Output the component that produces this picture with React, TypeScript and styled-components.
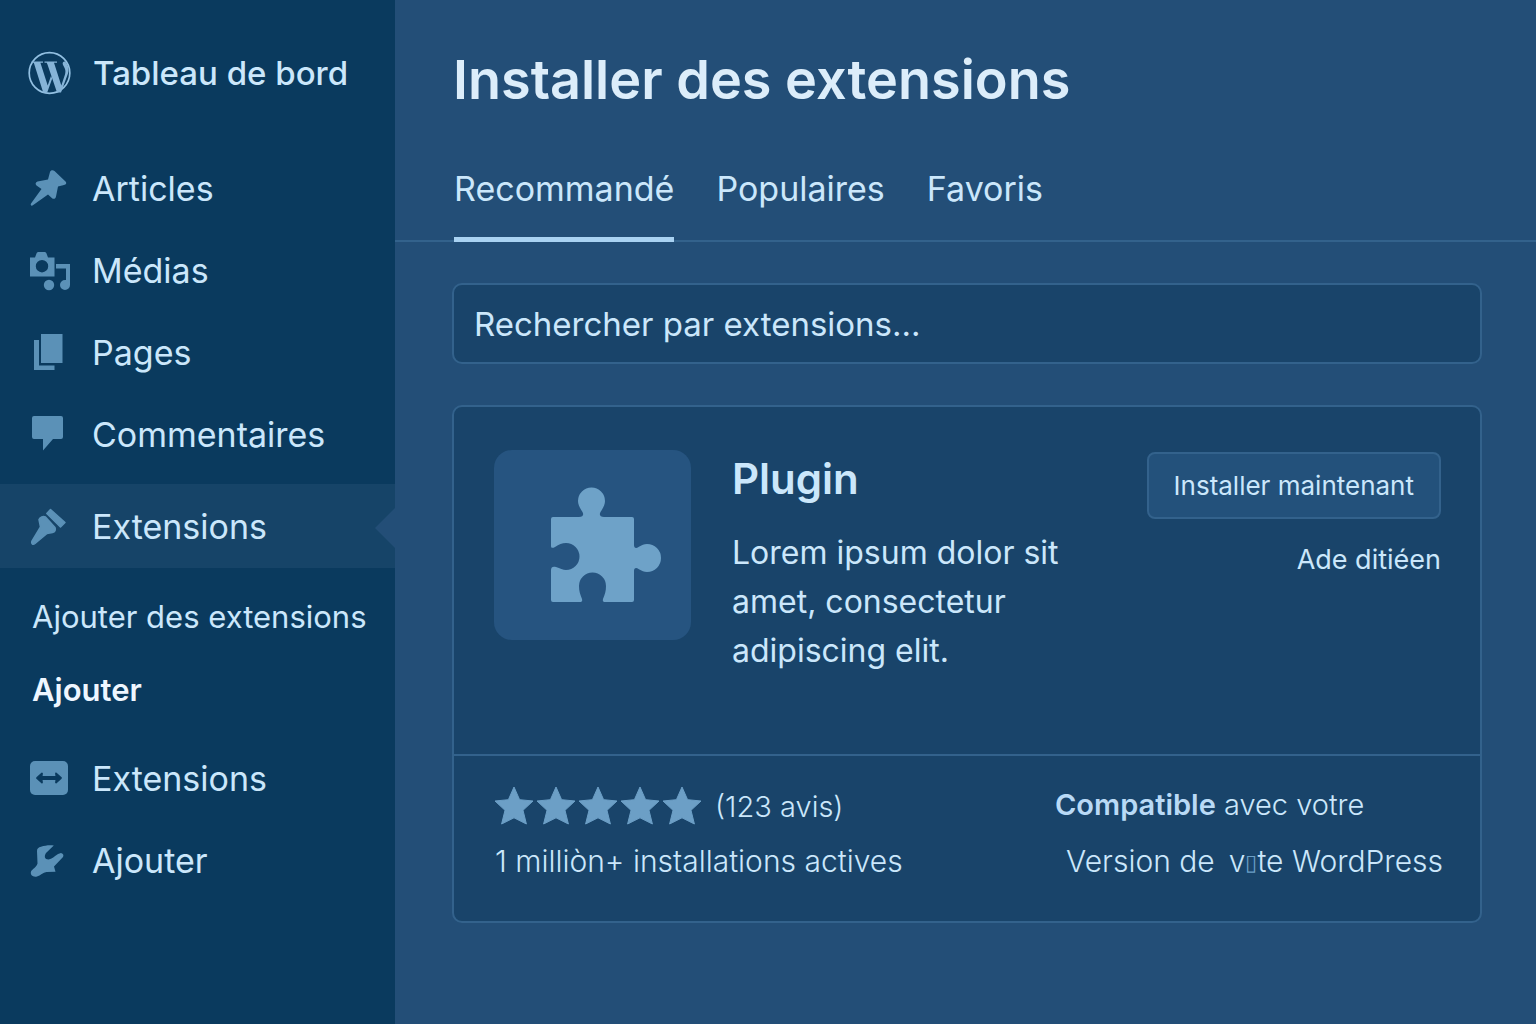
import React from "react";
import styled, { createGlobalStyle, css } from "styled-components";

const color = {
  sidebar: "#0a3a5e",
  sidebarActive: "#164468",
  page: "#234e77",
  panel: "#19446a",
  line: "#33628c",
  text: "#cbe7fb",
  title: "#dcedfa",
  strong: "#eef6ff",
  icon: "#5b91b7",
  bright: "#6c9fc6",
};

const Global = createGlobalStyle`
  *, *::before, *::after { box-sizing: border-box; }
  body {
    margin: 0;
    background: ${color.page};
    color: ${color.text};
    font-family: Inter, "Liberation Sans", sans-serif;
  }
  h1, h2, p, ul { margin: 0; padding: 0; }
  ul { list-style: none; }
`;

const Shell = styled.div`
  display: grid;
  grid-template-columns: 395px minmax(0, 1fr);
  min-height: 100vh;
`;

const Sidebar = styled.nav`
  background: ${color.sidebar};
  padding-top: 32px;
`;

const Brand = styled.a`
  display: flex;
  align-items: center;
  gap: 21px;
  height: 82px;
  padding-left: 28px;
  margin-bottom: 33px;
  color: ${color.text};
  font-size: 33px;
  font-weight: 500;
  text-decoration: none;
`;

const NavLink = styled.a<{ $active?: boolean }>`
  display: flex;
  align-items: center;
  gap: 20px;
  height: 82px;
  padding-left: 28px;
  color: ${color.text};
  font-size: 34px;
  text-decoration: none;
  ${(p) =>
    p.$active &&
    css`
      position: relative;
      height: 84px;
      background: ${color.sidebarActive};
      &::after {
        content: "";
        position: absolute;
        right: 0;
        top: 24px;
        border: 20px solid transparent;
        border-left-width: 0;
        border-right-color: ${color.page};
      }
    `}
`;

const NavList = styled.ul`
  margin: 0;
`;

const SubList = styled.ul`
  padding: 12px 0 11px;
`;

const SubLink = styled.a<{ $current?: boolean }>`
  display: flex;
  align-items: center;
  height: 73px;
  padding-left: 32px;
  color: ${(p) => (p.$current ? color.strong : color.text)};
  font-size: 31px;
  font-weight: ${(p) => (p.$current ? 600 : 400)};
  text-decoration: none;
  white-space: nowrap;
`;

const Main = styled.main`
  min-width: 0;
`;

const Title = styled.h1`
  padding: 44px 58px 0;
  color: ${color.title};
  font-size: 54px;
  line-height: 72px;
  font-weight: 600;
`;

const Tabs = styled.div`
  display: flex;
  gap: 42px;
  margin-top: 23px;
  padding: 0 59px;
  border-bottom: 2px solid ${color.line};
`;

const Tab = styled.button<{ $active?: boolean }>`
  height: 103px;
  margin-bottom: -2px;
  padding: 1px 0 0;
  border: 0;
  border-bottom: 5px solid ${(p) => (p.$active ? "#a9d2f2" : "transparent")};
  background: none;
  color: ${color.text};
  font-family: inherit;
  font-size: 34px;
`;

const Content = styled.div`
  display: grid;
  gap: 41px;
  padding: 41px 54px 41px 57px;
`;

const Search = styled.input`
  width: 100%;
  height: 81px;
  padding: 0 20px;
  border: 2px solid ${color.line};
  border-radius: 10px;
  background: ${color.panel};
  color: ${color.text};
  font-family: inherit;
  font-size: 33px;
  &::placeholder { color: ${color.text}; opacity: 1; }
`;

const Card = styled.article`
  border: 2px solid ${color.line};
  border-radius: 10px;
  background: ${color.panel};
`;

const CardBody = styled.div`
  display: flex;
  align-items: flex-start;
  min-height: 347px;
  padding: 43px 39px 0 40px;
`;

const Thumb = styled.div`
  flex: none;
  width: 197px;
  height: 190px;
  border-radius: 18px;
  background: #265480;
`;

const Summary = styled.div`
  flex: 1;
  padding-left: 41px;
`;

const PluginName = styled.h2`
  color: ${color.text};
  font-size: 42px;
  line-height: 57px;
  font-weight: 600;
`;

const Description = styled.p`
  max-width: 350px;
  margin-top: 21px;
  font-size: 32px;
  line-height: 49px;
`;

const Actions = styled.div`
  display: flex;
  flex-direction: column;
  align-items: flex-end;
  gap: 22px;
  padding-top: 2px;
`;

const InstallButton = styled.button`
  height: 67px;
  padding: 0 25px;
  border: 2px solid ${color.line};
  border-radius: 8px;
  background: #23517b;
  color: ${color.text};
  font-family: inherit;
  font-size: 26px;
`;

const MoreLink = styled.a`
  color: ${color.text};
  font-size: 27px;
  line-height: 38px;
  text-decoration: none;
`;

const CardFooter = styled.div`
  display: flex;
  justify-content: space-between;
  padding: 21px 37px 32px 41px;
  border-top: 2px solid ${color.line};
  font-size: 30px;
  line-height: 56px;
  font-weight: 300;
  white-space: nowrap;
`;

const Rating = styled.div`
  display: flex;
  align-items: center;
  gap: 12px;
  font-size: 29px;
  line-height: 60px;
`;

const Installs = styled.p`
  line-height: 48px;
`;

const Stars = styled.span`
  display: flex;
  gap: 2px;
`;

const CompatNote = styled.p`
  font-size: 29px;
`;

const Strong = styled.strong`
  color: #b9daf6;
  font-weight: 600;
`;

const Compat = styled.div`
  min-width: 388px;
`;

const VersionNote = styled.p`
  display: flex;
  justify-content: flex-end;
  gap: 14px;
`;

const Missing = styled.span`
  color: ${color.bright};
  font-family: "DejaVu Sans", sans-serif;
  font-size: 22px;
  line-height: 20px;
  vertical-align: 2px;
`;

const iconBox = { width: 44, height: 44, viewBox: "0 0 44 44", "aria-hidden": true } as const;

const Logo = () => (
  <svg {...iconBox} fill="#86b4d8">
    <circle cx="21.500" cy="22" r="20.300" fill="none" stroke="#93c0e2" strokeWidth="1.700" />
    <path d="M3.500 10.500H15v1.300h-2.600l7.300 22.700 3.300-9.500 1.200 2.500-5 14h-4L5.800 11.800H3.500z" />
    <path d="M16.500 10.500H29v1.300h-3l7.300 22.700 3.700-11c1.200-4-.2-6.500-1.700-9-1.300-2.600-.3-4 1.700-4 3 2.500 4.300 7 3 12L33 41.500h-4L19.500 13.500l-.8-1.700h-2.200z" />
  </svg>
);

const Pin = () => (
  <svg {...iconBox} fill={color.icon}>
    <path d="M22 6c.5-2 3-2.500 4.500-1l11 10.500c1.500 1.500.5 3.300-1.500 3.500l-6 1.500-2 10c-.4 2.500-2.500 3-4.200 1.500L20 28.500 4.500 39.500c-1.500.5-2.200-.5-1.500-2L13.500 23l-5-3.500c-1.500-1.500-1-3.500 1-4l10.500-2z" />
  </svg>
);

const Media = () => (
  <svg {...iconBox} fill={color.icon}>
    <path fillRule="evenodd" d="M2 9.500h5l1.500-4C9 4.500 9.500 4 10.500 4h6c1 0 1.500.5 2 1.500l1.500 4h6.500v19H2zM14 12a6.200 6.200 0 1 0 0 12.400A6.200 6.200 0 0 0 14 12z" />
    <path d="M28 16h14v21a5 5 0 1 1-5-5h1v-11.500H28z" />
    <circle cx="21" cy="37" r="5.200" />
  </svg>
);

const Pages = () => (
  <svg {...iconBox} fill={color.icon}>
    <path d="M13 4h21.500v29H13z" />
    <path d="M6 10h5v25.500h15.500V40H6z" />
  </svg>
);

const Comment = () => (
  <svg {...iconBox} fill={color.icon}>
    <path d="M6 4h27a2 2 0 0 1 2 2v19a2 2 0 0 1-2 2h-8L15 38.500V27H6a2 2 0 0 1-2-2V6a2 2 0 0 1 2-2z" />
  </svg>
);

const PushPin = () => (
  <svg {...iconBox} fill={color.icon} stroke={color.icon} strokeWidth="1.500" strokeLinejoin="round">
    <path d="M22.500 5.500L37 18.500 32.500 23 18.800 9.500z" />
    <path d="M11 15.500c1-2.500 4-3.500 6.500-2.500L27 23.500c1 2.500 0 4.500-2.500 5L19 29.500 7 39.500c-2 1.500-4 .5-3.200-2L12.500 23z" />
  </svg>
);

const Swap = () => (
  <svg {...iconBox}>
    <rect x="2" y="5" width="38" height="34" rx="5" fill={color.icon} />
    <path
      d="M9 22l5-4.500-.5 3.500h15l-.5-3.500L33 22l-5 4.500.5-3.500h-15l.5 3.500z"
      fill={color.sidebar}
      stroke={color.sidebar}
      strokeWidth="1.800"
      strokeLinejoin="round"
    />
  </svg>
);

const Wrench = () => (
  <svg {...iconBox} fill={color.icon}>
    <path d="M9 13c0-2.500 1.500-3.500 4-4.200C17 7.500 21 7 25.800 7.500L18 15c-2 3-1.500 6.500 2.500 6.500 5-1 8.500-6 12.500-6.500 2.500.5 3 2.500 1.800 4.200L26 28.500l1.500 5.300-9 .2c-3.500.5-6 3.500-9.500 4.500-4 1-7-1.500-6-5 1.500-2.500 5.500-4.500 6.500-8z" />
  </svg>
);

const Star = () => (
  <svg width="40" height="40" viewBox="0 0 40 40" fill={color.bright} aria-hidden="true">
    <path
      d="M19 0l5.600 12.700 13.400 1.300-10 9.300 3.400 13.700L19 30.800 6.600 37 10 23.300 0 14l13.400-1.300z"
      stroke={color.bright}
      strokeWidth="1"
      strokeLinejoin="round"
    />
  </svg>
);

const Puzzle = () => (
  <svg width="197" height="190" viewBox="0 0 197 190" fill="#6ea2c8" role="img" aria-label="Plugin">
    <path d="M59 67h26c4 0 5-2 3.500-5C86 58 84 55 84 51a13.500 13.500 0 0 1 27 0c0 4-2 7-4.500 11-1.500 3-.5 5 3.500 5h28q2 0 2 2v26c0 3 2 4 4.500 2C148 95 150 94 153 94a14 14 0 0 1 0 28c-3 0-5-1-8.500-3-2.500-2-4.500-1-4.500 2v29q0 2-2 2h-27c-2 0-2.500-1-2-3 2-5 3-8 3-13a13.500 13.500 0 0 0-27 0c0 5 1 8 3 13 .5 2 0 3-2 3H59q-2 0-2-2v-30c0-3 2-4 5-3 4 1.500 7 3 10 3a13.500 13.500 0 0 0 0-27c-4 0-7 1.500-11 4-2.500 1.500-4 1-4-1V69q0-2 2-2z" />
  </svg>
);

const topItems = [
  { label: "Articles", Icon: Pin },
  { label: "Médias", Icon: Media },
  { label: "Pages", Icon: Pages },
  { label: "Commentaires", Icon: Comment },
];

const bottomItems = [
  { label: "Extensions", Icon: Swap },
  { label: "Ajouter", Icon: Wrench },
];

const ActiveSection = styled.div`
  padding-top: 9px;
`;

export default function App() {
  return (
    <Shell>
      <Global />
      <Sidebar>
        <Brand href="#tableau">
          <Logo />
          Tableau de bord
        </Brand>
        <NavList>
          {topItems.map(({ label, Icon }) => (
            <li key={label}>
              <NavLink href="#menu">
                <Icon />
                {label}
              </NavLink>
            </li>
          ))}
        </NavList>
        <ActiveSection>
          <NavLink href="#extensions" $active>
            <PushPin />
            Extensions
          </NavLink>
          <SubList>
            <li>
              <SubLink href="#ajouter-des-extensions">Ajouter des extensions</SubLink>
            </li>
            <li>
              <SubLink href="#ajouter" $current>
                Ajouter
              </SubLink>
            </li>
          </SubList>
        </ActiveSection>
        <NavList>
          {bottomItems.map(({ label, Icon }) => (
            <li key={label}>
              <NavLink href="#menu">
                <Icon />
                {label}
              </NavLink>
            </li>
          ))}
        </NavList>
      </Sidebar>
      <Main>
        <Title>Installer des extensions</Title>
        <Tabs role="tablist">
          <Tab type="button" role="tab" aria-selected $active>
            Recommandé
          </Tab>
          <Tab type="button" role="tab">
            Populaires
          </Tab>
          <Tab type="button" role="tab">
            Favoris
          </Tab>
        </Tabs>
        <Content>
          <Search type="search" aria-label="Rechercher par extensions" placeholder="Rechercher par extensions..." />
          <Card>
            <CardBody>
              <Thumb>
                <Puzzle />
              </Thumb>
              <Summary>
                <PluginName>Plugin</PluginName>
                <Description>Lorem ipsum dolor sit amet, consectetur adipiscing elit.</Description>
              </Summary>
              <Actions>
                <InstallButton type="button">Installer maintenant</InstallButton>
                <MoreLink href="#details">Ade ditiéen</MoreLink>
              </Actions>
            </CardBody>
            <CardFooter>
              <div>
                <Rating>
                  <Stars>
                    {[1, 2, 3, 4, 5].map((n) => (
                      <Star key={n} />
                    ))}
                  </Stars>
                  <span>(123 avis)</span>
                </Rating>
                <Installs>1 milliòn+ installations actives</Installs>
              </div>
              <Compat>
                <CompatNote>
                  <Strong>Compatible</Strong> avec votre
                </CompatNote>
                <VersionNote>
                  <span>Version de</span>
                  <span>
                    v<Missing>▯</Missing>te WordPress
                  </span>
                </VersionNote>
              </Compat>
            </CardFooter>
          </Card>
        </Content>
      </Main>
    </Shell>
  );
}
